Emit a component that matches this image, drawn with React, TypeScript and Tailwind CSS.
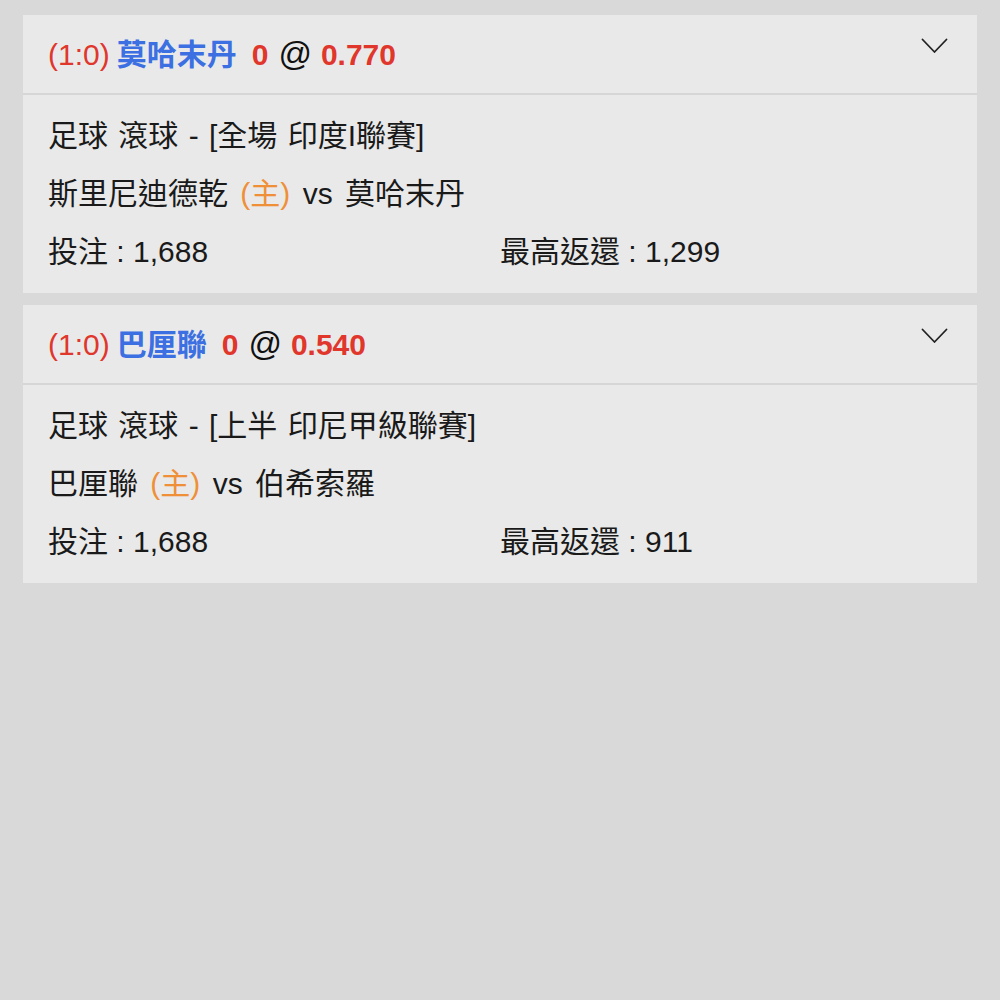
import React from 'react';

interface Bet {
  score: string;
  team: string;
  handicap: string;
  odds: string;
  sport: string;
  league: string;
  home: string;
  away: string;
  stake: string;
  maxReturn: string;
}

const bets: Bet[] = [
  {
    score: '(1:0)',
    team: '莫哈末丹',
    handicap: '0',
    odds: '0.770',
    sport: '足球 滾球',
    league: '[全場 印度I聯賽]',
    home: '斯里尼迪德乾',
    away: '莫哈末丹',
    stake: '1,688',
    maxReturn: '1,299',
  },
  {
    score: '(1:0)',
    team: '巴厘聯',
    handicap: '0',
    odds: '0.540',
    sport: '足球 滾球',
    league: '[上半 印尼甲級聯賽]',
    home: '巴厘聯',
    away: '伯希索羅',
    stake: '1,688',
    maxReturn: '911',
  },
];

const Chevron = () => (
  <svg width="27" height="16" viewBox="0 0 27 16" fill="none" className="shrink-0">
    <path d="M1.5 1.5 L13.5 14 L25.5 1.5" stroke="#222" strokeWidth="1.8" strokeLinecap="round" strokeLinejoin="round" />
  </svg>
);

const BetCard: React.FC<{ bet: Bet }> = ({ bet }) => (
  <div className="bg-[#e9e9e9]">
    {/* header */}
    <div className="h-[80px] flex items-center justify-between pl-[25px] pr-[29px] border-b-2 border-[#d6d6d6]">
      <div className="flex items-baseline whitespace-nowrap -mt-[1px]">
        <span className="text-[#e0362c]">{bet.score}</span>
        <span className="ml-[7px] font-bold text-[#3b6fe2]">{bet.team}</span>
        <span className="ml-[15px] font-bold text-[#e0362c]">{bet.handicap}</span>
        <span className="ml-[10px] text-[33px] text-[#111]">@</span>
        <span className="ml-[9px] font-bold text-[#e0362c]">{bet.odds}</span>
      </div>
      <div className="-mt-[16px]">
        <Chevron />
      </div>
    </div>

    {/* body */}
    <div className="px-[25px] py-[12px] leading-[58px] text-[#1a1a1a]">
      <div className="[word-spacing:2px]">
        {bet.sport} - {bet.league}
      </div>
      <div className="[word-spacing:4px]">
        {bet.home} <span className="text-[#ef9038]">(主)</span> vs {bet.away}
      </div>
      <div className="grid grid-cols-2">
        <div>投注 : {bet.stake}</div>
        <div>最高返還 : {bet.maxReturn}</div>
      </div>
    </div>
  </div>
);

export default function App() {
  return (
    <div
      className="min-h-[1000px] w-full bg-[#d9d9d9] px-[23px] pt-[15px] text-[30px] flex flex-col gap-[12px]"
      style={{ fontFamily: '"Liberation Sans", "Noto Sans CJK TC", sans-serif' }}
    >
      {bets.map((bet, i) => (
        <BetCard key={i} bet={bet} />
      ))}
    </div>
  );
}
